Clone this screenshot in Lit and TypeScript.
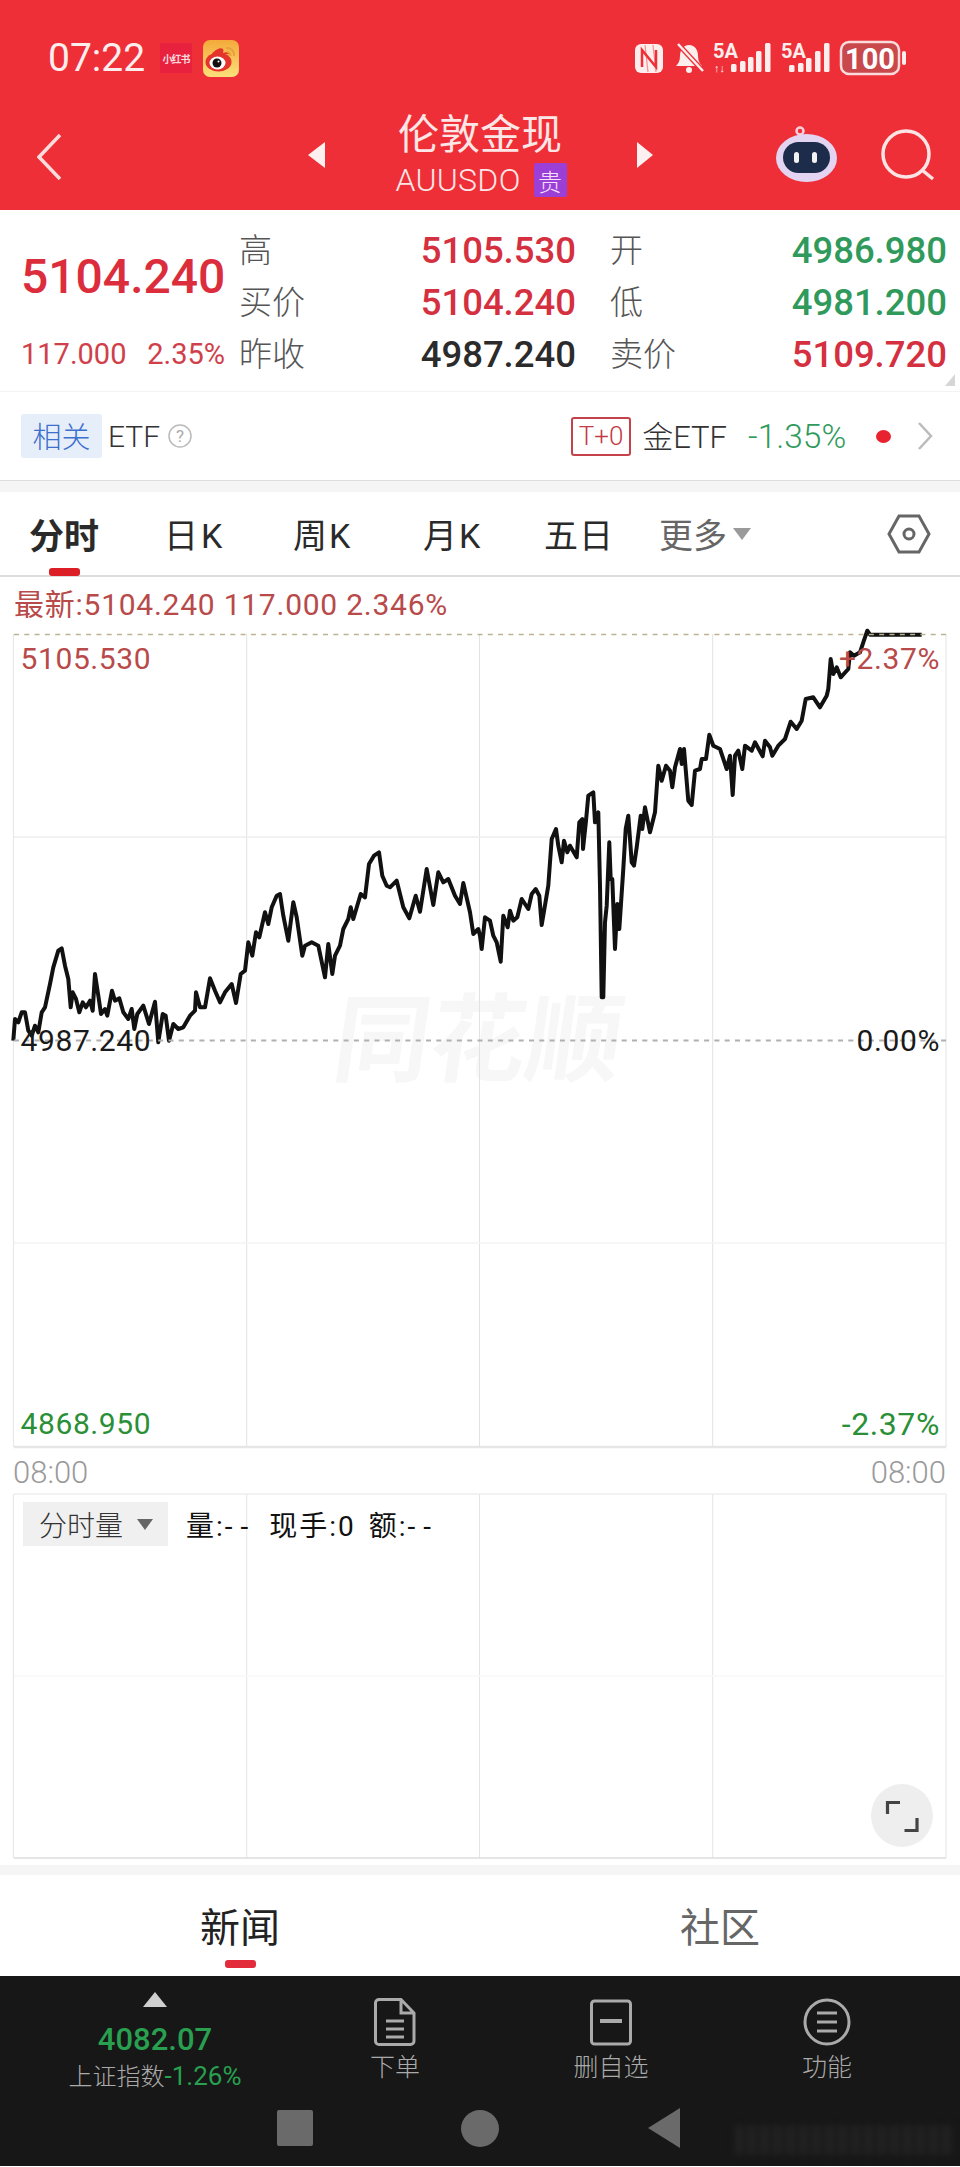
import { LitElement, html, css, svg } from "lit";
import { customElement } from "lit/decorators.js";

const A = [40,1385,45,1320,55,1330,65,1300,75,1300,85,1355,95,1370,105,1340,115,1360,125,1300,135,1285,150,1215,160,1165,175,1115,185,1108,195,1160,205,1200,212,1285,218,1240,228,1260,238,1300,248,1270,258,1285,270,1265,278,1295,285,1185,298,1270,303,1305,315,1290,322,1310,336,1235,345,1265,358,1258,370,1300,385,1320,395,1290,403,1350,412,1305,430,1280,447,1335,465,1268,475,1390,488,1305,497,1310,507,1385,520,1335,535,1350,550,1345,570,1310,585,1295,588,1240,600,1285,615,1285,630,1198,645,1235,660,1270,675,1240,695,1215,708,1272,722,1185,735,1175,745,1090,757,1130,768,1060,778,1075,795,1000,805,1035,815,985,830,950,840,945,850,1010,865,1085,880,970,890,1015,907,1130,915,1100,935,1090,955,1100,975,1195,985,1095,997,1185,1005,1130,1020,1100,1030,1050,1045,1020,1052,985,1060,1020,1082,945,1095,955,1107,855,1122,830,1137,820,1147,890,1160,920,1170,925,1190,905,1210,985,1228,1018,1247,950,1260,998,1280,870,1300,978,1315,880,1330,910,1345,900,1365,950,1380,975,1390,912,1410,1000,1420,1065,1435,1050];
const B = [0,1010,5,1050,15,955,30,965,40,1010,50,1030,62,1088,70,950,83,985,90,935,100,965,112,955,125,900,145,930,155,885,167,870,178,890,185,978,205,860,215,720,228,690,235,740,245,790,252,725,262,760,270,740,290,775,298,670,307,660,309,750,318,665,325,590,340,580,345,670,355,640,360,860,365,1195,370,1195,375,970,380,920,388,730,392,840,397,840,405,1050,412,915,418,990,430,810,437,690,445,650,455,790,462,800,470,745,482,650,487,690,495,625,510,700,525,640,535,500,545,545,558,500,570,515,577,565,585,505,600,450,605,495,612,450,625,605,635,618,645,515,660,510,665,480,678,480,688,407,700,440,720,450,740,510,750,470,758,588,765,470,775,455,787,510,795,440,815,455,825,430,848,472,855,425,870,445,877,470,895,440,915,420,932,368,950,390,965,365,977,300,1000,295,1020,325,1040,290,1045,270,1052,180,1060,225,1070,205,1082,235,1105,210,1110,160,1122,170,1140,160,1150,130,1162,95,1170,107,1325,107];

function pts(): string {
  const out: string[] = [];
  for (let i = 0; i < A.length; i += 2) out.push(`${(A[i] / 3).toFixed(1)},${(580 + A[i + 1] / 3).toFixed(1)}`);
  for (let i = 0; i < B.length; i += 2) out.push(`${(480 + B[i] / 3).toFixed(1)},${(600 + B[i + 1] / 3).toFixed(1)}`);
  return out.join(" ");
}

const verticals = [246.7, 479.5, 712.7];

@customElement("app-root")
export class AppRoot extends LitElement {
  static styles = css`
    :host { display: block; width: 960px; height: 2167px; overflow: hidden; background: #fff; font-family: Roboto, "Noto Sans CJK SC", sans-serif; color: #222; }
    * { box-sizing: border-box; }
    svg { display: block; }

    .header { height: 210px; background: #ee2f38; color: #fde6e6; }
    .status { height: 116px; display: flex; align-items: center; padding-left: 48px; }
    .time { font-size: 39px; width: 112px; color: #fdeeee; }
    .xhs { width: 32px; height: 30px; margin-right: 11px; background: #e8213f; color: #f8d9dd; font-size: 10px; font-weight: 700; display: flex; align-items: center; justify-content: center; white-space: nowrap; letter-spacing: -1px; }
    .status-right { margin-left: auto; margin-right: 48px; }
    .nav { height: 94px; display: flex; align-items: center; padding-left: 37px; position: relative; }
    .back { margin-top: -12px; }
    .m-a { margin-left: 246px; margin-top: -16px; }
    .title { width: 312px; display: flex; flex-direction: column; align-items: center; margin-top: -15px; }
    .title-main { font-size: 41px; line-height: 44px; font-weight: 400; color: #fde6e6; margin-left: -2px; }
    .title-sub { display: flex; align-items: center; gap: 13px; height: 36px; font-size: 32px; font-weight: 300; letter-spacing: 0.3px; margin-top: 5px; }
    .tag { width: 33px; height: 34px; background: #9b3fd6; color: #f4dfff; border-radius: 2px; font-size: 24px; display: flex; align-items: center; justify-content: center; }
    .m-b { margin-top: -16px; }
    .robot { margin-left: 123px; margin-top: -18px; }
    .search { margin-left: 44px; margin-top: -16px; }

    .quote { height: 182px; padding: 14px 13px 0 21px; display: grid; grid-template-columns: 218px 337px 371px; grid-template-rows: 52px 52px 52px; position: relative; border-bottom: 1px solid #f3f3f3; }
    .big { grid-row: 1 / 3; grid-column: 1; font-size: 48px; font-weight: 500; color: #dc2d3c; display: flex; align-items: center; }
    .small { grid-row: 3; grid-column: 1; display: flex; justify-content: space-between; width: 204px; align-items: center; font-size: 29px; color: #d0404a; }
    .cell { display: flex; justify-content: space-between; align-items: center; width: 337px; }
    .cell.r { margin-left: 34px; }
    .lab { font-size: 33px; color: #555; font-weight: 300; margin-top: -5px; }
    .val { font-weight: 500; font-size: 36.5px; }
    .red { color: #d5303f; }
    .green { color: #2f9a5b; }
    .black { color: #2b2b2b; }
    .corner { position: absolute; right: 5px; bottom: 5px; width: 0; height: 0; border-left: 10px solid transparent; border-bottom: 12px solid #d6d6d6; }

    .etf { height: 89px; display: flex; align-items: center; padding-left: 21px; border-bottom: 1px solid #ddd; }
    .chip { width: 81px; height: 44px; background: #e6eef9; color: #3c6fce; font-size: 29px; font-weight: 300; display: flex; align-items: center; justify-content: center; border-radius: 3px; padding-bottom: 2px; }
    .etf-t { font-size: 30px; color: #333; font-weight: 300; margin-left: 6px; }
    .help { margin-left: 8px; }
    .t0 { margin-left: 379px; width: 60px; height: 39px; border: 2px solid #c4424a; border-radius: 3px; color: #c23a44; font-size: 26px; display: flex; align-items: center; justify-content: center; font-weight: 300; }
    .gold { margin-left: 11px; font-size: 31px; color: #333; font-weight: 300; margin-top: -3px; }
    .pct { margin-left: 21px; font-size: 33.5px; color: #2f9a5b; font-weight: 300; }
    .dot { width: 15px; height: 13px; border-radius: 50%; background: #e8222e; margin-left: 30px; }
    .chev { margin-left: 26px; }

    .gap { height: 11px; background: #f5f5f5; }
    .tabs { height: 85px; display: flex; align-items: center; position: relative; border-bottom: 2px solid #ddd; font-size: 34px; font-weight: 400; color: #2a2a2a; }
    .tab { white-space: nowrap; }
    .tab.on { font-weight: 700; font-size: 35px; margin-left: 29px; width: 135px; }
    .t2 { width: 129px; letter-spacing: 3px; }
    .t3 { width: 130px; letter-spacing: 2px; }
    .t4 { width: 121px; letter-spacing: 2px; }
    .t5 { width: 115px; letter-spacing: 1px; }
    .more { color: #666; display: flex; align-items: center; gap: 6px; }
    .bar { position: absolute; left: 49px; top: 76px; width: 31px; height: 8px; background: #dc1f26; border-radius: 3px; }
    .gear { margin-left: auto; margin-right: 29px; }

    .latest { height: 57px; padding: 10px 0 0 14px; font-size: 30px; line-height: 35px; color: #b84a4a; letter-spacing: 0.75px; white-space: nowrap; }

    .chart { height: 813px; position: relative; }
    .chart svg, .vol svg { overflow: visible; position: absolute; left: 0; top: 0; }
    .wm { font-size: 96px; font-weight: 700; fill: #f7f7f7; font-family: "Noto Sans CJK SC", sans-serif; }
    .lbl { position: absolute; font-size: 30px; line-height: 36px; letter-spacing: 0.6px; white-space: nowrap; }
    .lb { color: #b84a4a; }
    .lg { color: #2a8f36; }
    .lk { color: #1a1a1a; }

    .times { height: 47px; display: flex; justify-content: space-between; align-items: center; padding: 3px 14px 0 13px; font-size: 31px; color: #9a9a9a; font-weight: 300; }

    .vol { height: 364px; position: relative; }
    .vol-chip { position: absolute; left: 23px; top: 8px; width: 145px; height: 44px; background: #f0f0f0; display: flex; align-items: center; padding-left: 16px; gap: 14px; font-size: 28px; color: #333; font-weight: 300; }
    .vol-tri { width: 0; height: 0; border-left: 8px solid transparent; border-right: 8px solid transparent; border-top: 11px solid #666; }
    .vol-info { position: absolute; left: 186px; top: 8px; height: 44px; display: flex; align-items: center; gap: 13px; font-size: 28px; color: #111; white-space: nowrap; letter-spacing: 2px; }
    .dash { letter-spacing: 8px; }
    .full { position: absolute; left: 871px; top: 290px; width: 62px; height: 63px; border-radius: 50%; background: #eee; }

    .sep { height: 7px; }
    .gap2 { height: 10px; background: #f5f5f5; }
    .news { height: 101px; display: flex; position: relative; font-size: 40px; align-items: center; padding-bottom: 2px; }
    .n1 { margin-left: 200px; color: #222; width: 480px; }
    .n2 { color: #666; }
    .nbar { position: absolute; left: 225px; top: 85px; width: 31px; height: 8px; background: #e22b3b; border-radius: 3px; }

    .foot { height: 190px; background: #171717; }
    .items { height: 127px; display: grid; grid-template-columns: 240px 216px 216px 216px; padding-left: 47px; }
    .item { display: flex; flex-direction: column; align-items: center; padding-top: 22px; color: #aaa; font-size: 25px; font-weight: 300; }
    .item svg { height: 48px; }
    .item span { margin-top: 9px; line-height: 26px; }
    .first { padding: 16px 24px 0 0; display: flex; flex-direction: column; align-items: center; }
    .up { width: 0; height: 0; border-left: 12px solid transparent; border-right: 12px solid transparent; border-bottom: 15px solid #cfcfcf; }
    .idx { font-size: 31px; line-height: 32px; font-weight: 500; color: #28a050; margin-top: 17px; }
    .sub { font-size: 24px; line-height: 28px; margin-top: 6px; color: #aaa; font-weight: 300; white-space: nowrap; }
    .sub b { color: #28a050; font-weight: 400; font-size: 26px; }
    .sys { height: 50px; display: flex; align-items: center; padding-left: 277px; position: relative; }
    .sq { width: 36px; height: 36px; background: #6a6a6a; border-radius: 2px; }
    .ci { width: 38px; height: 37px; background: #6a6a6a; border-radius: 50%; margin-left: 148px; }
    .tr { width: 0; height: 0; margin-left: 149px; border-top: 20px solid transparent; border-bottom: 20px solid transparent; border-right: 32px solid #6a6a6a; }
    .smudge { position: absolute; left: 735px; top: 22px; width: 220px; height: 30px; background: repeating-linear-gradient(90deg, #232323 0 7px, #1a1a1a 7px 13px); filter: blur(3px); }
  `;

  private statusIcons() {
    const bars = (xs: number[], hs: number[]) => xs.map((x, i) => svg`<rect x=${x} y=${74 - hs[i]} width="5.5" height=${hs[i]} rx="1.5" fill="#fdeeee"/>`);
    return svg`
      <svg class="status-right" width="278" height="40" viewBox="638 40 278 40">
        <rect x="639" y="46" width="28" height="29" rx="6" fill="#fdeeee"/>
        <path d="M646 69V52l14 17V52" fill="none" stroke="#ee2f38" stroke-width="2.5"/>
        <path d="M649 47l3 27M657 47l3 27" stroke="#ee2f38" stroke-width="1.2" opacity="0.5"/>
        <path d="M693 47c-6 0-9 5-9 11 0 5-2 8-4 10h26c-2-2-4-5-4-10 0-6-3-11-9-11z" fill="#fdeeee"/>
        <circle cx="693" cy="72" r="3" fill="#fdeeee"/>
        <path d="M682 46l25 27" stroke="#ee2f38" stroke-width="5"/>
        <path d="M682 46l25 27" stroke="#fdeeee" stroke-width="2.5"/>
        <text x="717" y="60" font-size="20" font-weight="700" fill="#fdeeee" font-family="Roboto, sans-serif">5A</text>
        <text x="718" y="74" font-size="11" font-weight="700" fill="#fdeeee" font-family="Roboto, sans-serif">↑↓</text>
        ${bars([735, 744, 752, 760, 769], [8, 11, 15, 21, 29])}
        <text x="785" y="60" font-size="20" font-weight="700" fill="#fdeeee" font-family="Roboto, sans-serif">5A</text>
        ${bars([793, 802, 810, 819, 828], [7, 9, 14, 21, 29])}
        <rect x="845" y="44" width="58" height="32" rx="8" fill="#c8484c" stroke="#fbdcdc" stroke-width="2.5"/>
        <text x="874" y="71" text-anchor="middle" font-size="29" font-weight="700" fill="#fff" font-family="Roboto, sans-serif">100</text>
        <rect x="906" y="53" width="4" height="14" rx="2" fill="#fdeeee"/>
      </svg>`;
  }

  render() {
    return html`
      <div class="header">
        <div class="status">
          <div class="time">07:22</div>
          <div class="xhs">小红书</div>
          <svg width="36" height="37" viewBox="0 0 36 37">
            <defs><linearGradient id="wb" x1="0" y1="0" x2="0" y2="1"><stop offset="0" stop-color="#f4a93a"/><stop offset="1" stop-color="#fbe07a"/></linearGradient></defs>
            <rect width="36" height="37" rx="7" fill="url(#wb)"/>
            <ellipse cx="15.5" cy="22" rx="13" ry="9.5" fill="#e5342c"/>
            <path d="M8 15c4-6 10-8 12-6 1 1 0 3 0 4 3-1 6-1 7 1" fill="#e5342c"/>
            <ellipse cx="14.5" cy="23" rx="8" ry="6.5" fill="#fff"/>
            <circle cx="14" cy="23" r="4.5" fill="#111"/>
            <circle cx="15.5" cy="21.5" r="1" fill="#fff"/>
            <path d="M23 8a7 7 0 0 1 8 8M24 12a3.5 3.5 0 0 1 3.5 4" fill="none" stroke="#e9a13a" stroke-width="2"/>
          </svg>
          ${this.statusIcons()}
        </div>
        <div class="nav">
          <svg class="back" width="25" height="46" viewBox="0 0 25 46"><path d="M23 1L2 23l21 22" fill="none" stroke="#fbdcdc" stroke-width="3.5"/></svg>
          <svg class="m-a" width="17" height="26" viewBox="0 0 17 26"><path d="M17 0v26L0 13z" fill="#fdf0f0"/></svg>
          <div class="title">
            <div class="title-main">伦敦金现</div>
            <div class="title-sub"><span>AUUSDO</span><span class="tag">贵</span></div>
          </div>
          <svg class="m-b" width="16" height="26" viewBox="0 0 16 26"><path d="M0 0v26l16-13z" fill="#fdf0f0"/></svg>
          <svg class="robot" width="61" height="56" viewBox="0 0 61 56">
            <circle cx="24" cy="5" r="3.5" fill="none" stroke="#f5cfe0" stroke-width="2.5"/>
            <ellipse cx="30.5" cy="32" rx="30.5" ry="24" fill="#e3d4f2"/>
            <rect x="7" y="16" width="47" height="31" rx="15.5" fill="#1e2c4c"/>
            <rect x="18" y="26" width="5" height="11" rx="2.5" fill="#f2f2f2"/>
            <rect x="36" y="26" width="5" height="11" rx="2.5" fill="#f2f2f2"/>
          </svg>
          <svg class="search" width="54" height="52" viewBox="0 0 54 52"><circle cx="25" cy="25" r="23" fill="none" stroke="#fde4e4" stroke-width="3.5"/><path d="M41 41l11 9" stroke="#fde4e4" stroke-width="3.5"/></svg>
        </div>
      </div>

      <div class="quote">
        <div class="big">5104.240</div>
        <div class="cell" style="grid-row:1;grid-column:2"><span class="lab">高</span><span class="val red">5105.530</span></div>
        <div class="cell r" style="grid-row:1;grid-column:3"><span class="lab">开</span><span class="val green">4986.980</span></div>
        <div class="cell" style="grid-row:2;grid-column:2"><span class="lab">买价</span><span class="val red">5104.240</span></div>
        <div class="cell r" style="grid-row:2;grid-column:3"><span class="lab">低</span><span class="val green">4981.200</span></div>
        <div class="small"><span>117.000</span><span>2.35%</span></div>
        <div class="cell" style="grid-row:3;grid-column:2"><span class="lab">昨收</span><span class="val black">4987.240</span></div>
        <div class="cell r" style="grid-row:3;grid-column:3"><span class="lab">卖价</span><span class="val red">5109.720</span></div>
        <div class="corner"></div>
      </div>

      <div class="etf">
        <div class="chip">相关</div>
        <div class="etf-t">ETF</div>
        <svg class="help" width="24" height="26" viewBox="0 0 24 26"><circle cx="12" cy="13" r="11" fill="none" stroke="#bbb" stroke-width="1.5"/><text x="12" y="19" text-anchor="middle" font-size="17" fill="#aaa" font-family="Roboto, sans-serif">?</text></svg>
        <div class="t0">T+0</div>
        <div class="gold">金ETF</div>
        <div class="pct">-1.35%</div>
        <div class="dot"></div>
        <svg class="chev" width="16" height="28" viewBox="0 0 16 28"><path d="M2 1l12 13L2 27" fill="none" stroke="#bbb" stroke-width="2.5"/></svg>
      </div>
      <div class="gap"></div>

      <div class="tabs">
        <div class="tab on">分时</div>
        <div class="tab t2">日K</div>
        <div class="tab t3">周K</div>
        <div class="tab t4">月K</div>
        <div class="tab t5">五日</div>
        <div class="tab more">更多<svg width="18" height="12" viewBox="0 0 18 12"><path d="M0 0h18L9 12z" fill="#9a9a9a"/></svg></div>
        <div class="bar"></div>
        <svg class="gear" width="44" height="40" viewBox="0 0 44 40"><path d="M12 2h20l10 18-10 18H12L2 20z" fill="none" stroke="#666" stroke-width="3"/><circle cx="22" cy="20" r="5" fill="none" stroke="#666" stroke-width="3"/></svg>
      </div>

      <div class="latest">最新:5104.240 117.000 2.346%</div>

      <div class="chart">
        <svg width="960" height="813" viewBox="0 635 960 813">
          <text class="wm" x="336" y="1075" transform="skewX(-8)" style="transform-box:fill-box;transform-origin:center">同花顺</text>
          <path d="M13.5 635V1448M946 635V1448" stroke="#e8e8e8" stroke-width="1.2"/>
          ${verticals.map((x) => svg`<path d="M${x} 635V1448" stroke="#e2e2e2" stroke-width="1"/>`)}
          <path d="M14 838H946" stroke="#eeeeee" stroke-width="1.5"/>
          <path d="M14 1244H946" stroke="#f3f3f3" stroke-width="1.5"/>
          <path d="M14 1448H946" stroke="#e6e6e6" stroke-width="2.5"/>
          <polyline points=${pts()} fill="none" stroke="#111" stroke-width="4" stroke-linejoin="round"/>
          <path d="M14 635.5H946" stroke="#bdb48f" stroke-width="1.5" stroke-dasharray="5 5.3"/>
          <path d="M14 1041.5H946" stroke="#b0b0b0" stroke-width="1.8" stroke-dasharray="5 5.3"/>
        </svg>
        <div class="lbl lb" style="left:20.5px;top:7px">5105.530</div>
        <div class="lbl lb" style="right:20px;top:7px">+2.37%</div>
        <div class="lbl lk" style="left:20.5px;top:389px">4987.240</div>
        <div class="lbl lk" style="right:20px;top:389px">0.00%</div>
        <div class="lbl lg" style="left:20.5px;top:772px">4868.950</div>
        <div class="lbl lg" style="right:20px;top:772px;font-size:32px">-2.37%</div>
      </div>

      <div class="times"><span>08:00</span><span>08:00</span></div>

      <div class="vol">
        <svg width="960" height="364" viewBox="0 1495 960 364">
          <path d="M13.5 1495V1859M946 1495V1859" stroke="#e8e8e8" stroke-width="1.2"/>
          ${verticals.map((x) => svg`<path d="M${x} 1495V1859" stroke="#e4e4e4" stroke-width="1"/>`)}
          <path d="M14 1495H946" stroke="#eee" stroke-width="1.5"/>
          <path d="M14 1677H946" stroke="#f8f8f8" stroke-width="1.5"/>
          <path d="M14 1859H946" stroke="#dcdcdc" stroke-width="1.5"/>
        </svg>
        <div class="vol-chip"><span>分时量</span><span class="vol-tri"></span></div>
        <div class="vol-info"><span>量:<span class="dash">--</span></span><span>现手:0</span><span>额:<span class="dash">--</span></span></div>
        <div class="full">
          <svg width="62" height="63" viewBox="0 0 62 63"><path d="M16.5 30V18.5H29M46 34V46.5H33.5" fill="none" stroke="#444" stroke-width="3.2"/></svg>
        </div>
      </div>

      <div class="sep"></div>
      <div class="gap2"></div>
      <div class="news">
        <div class="n1">新闻</div>
        <div class="n2">社区</div>
        <div class="nbar"></div>
      </div>

      <div class="foot">
        <div class="items">
          <div class="first">
            <div class="up"></div>
            <div class="idx">4082.07</div>
            <div class="sub">上证指数<b>-1.26%</b></div>
          </div>
          <div class="item">
            <svg width="42" height="48" viewBox="0 0 42 48"><path d="M5 1.5H27L40 15V43a3.5 3.5 0 0 1-3.5 3.5H5A3.5 3.5 0 0 1 1.5 43V5A3.5 3.5 0 0 1 5 1.5zM27 1.5V15H40M12 23H30M12 31H30M12 39H30" fill="none" stroke="#aaa" stroke-width="3"/></svg>
            <span>下单</span>
          </div>
          <div class="item">
            <svg width="42" height="48" viewBox="0 0 42 48"><rect x="1.5" y="3" width="39" height="43" rx="3" fill="none" stroke="#aaa" stroke-width="3"/><path d="M10 23H32" stroke="#aaa" stroke-width="4"/></svg>
            <span>删自选</span>
          </div>
          <div class="item">
            <svg width="48" height="48" viewBox="0 0 48 48"><circle cx="24" cy="24" r="22" fill="none" stroke="#aaa" stroke-width="3"/><path d="M14 15H34M14 24H34M14 33H34" stroke="#aaa" stroke-width="3.2"/></svg>
            <span>功能</span>
          </div>
        </div>
        <div class="sys">
          <div class="sq"></div>
          <div class="ci"></div>
          <div class="tr"></div>
          <div class="smudge"></div>
        </div>
      </div>
    `;
  }
}
